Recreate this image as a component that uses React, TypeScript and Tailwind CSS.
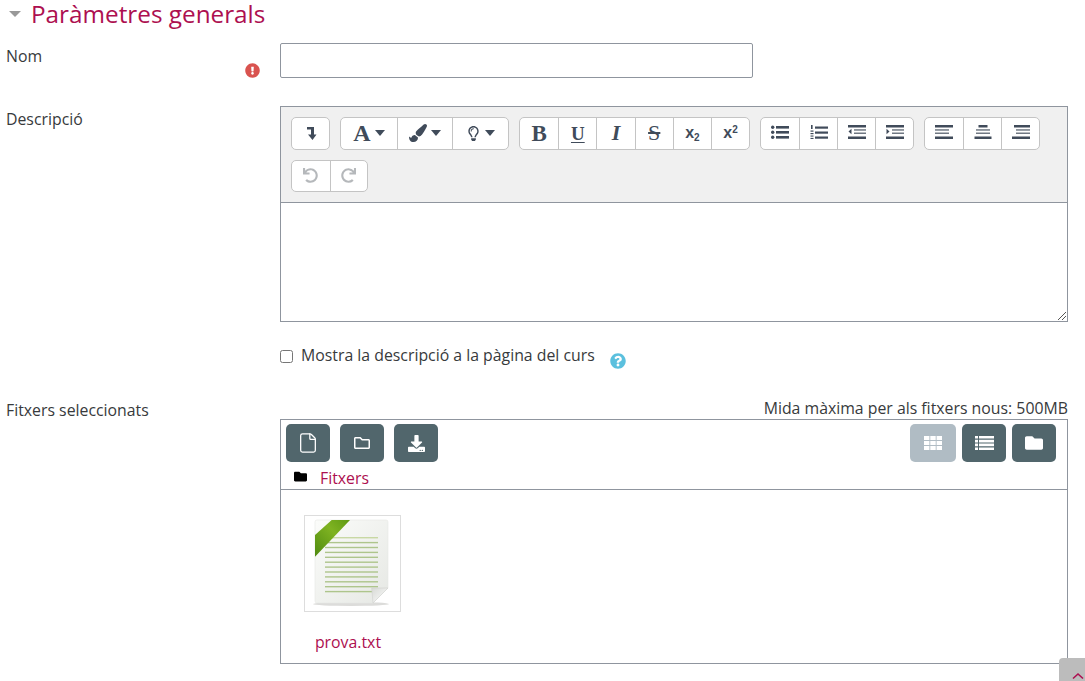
import type { ReactNode } from "react";
import { File } from "lucide-react";
import {
  FaDownload,
  FaExclamationCircle,
  FaFolder,
  FaPaintBrush,
  FaQuestionCircle,
  FaRedo,
  FaRegFolder,
  FaRegLightbulb,
  FaUndo,
} from "react-icons/fa";

const serif = "font-['Liberation_Serif',serif] font-bold text-[#404b5a]";

type Bar = [number, number, number, number, number?];

// the atto toolbar glyphs are mostly stacks of bars
function Bars({ bars, extra, w = 18, h = 14 }: { bars: Bar[]; extra?: ReactNode; w?: number; h?: number }) {
  return (
    <svg width={w} height={h} viewBox={`0 0 ${w} ${h}`} className="-mt-[2px]" fill="currentColor">
      {bars.map(([x, y, bw, bh, o], i) => (
        <rect key={i} x={x} y={y} width={bw} height={bh} opacity={o ?? 1} />
      ))}
      {extra}
    </svg>
  );
}

const listBars: Bar[] = [
  [5, 1, 13, 2.6],
  [5, 6, 13, 2.6],
  [5, 11, 13, 2.6],
];

function Caret() {
  return <div className="w-0 h-0 border-x-[5.5px] border-x-transparent border-t-[6px] border-t-[#404b5a]" />;
}

function CollapseIcon() {
  return (
    <svg width="16" height="16" viewBox="0 0 16 16" className="text-[#404b5a]">
      <path d="M4 2h7v7.5h2.5L9.5 15l-4.5-5.5h3V4.5H4z" fill="currentColor" />
    </svg>
  );
}

function ToolButton({ children, w = "w-[38px]" }: { children: ReactNode; w?: string }) {
  return (
    <div
      className={
        w +
        " h-full flex items-center justify-center gap-[4px] border-l border-[#c4c4c4] first:border-l-0 text-[#404b5a] text-[15px]"
      }
    >
      {children}
    </div>
  );
}

function ToolGroup({ children }: { children: ReactNode }) {
  return (
    <div className="flex h-[32.5px] items-stretch bg-white border border-[#c4c4c4] rounded-[5px]">
      {children}
    </div>
  );
}

function FmButton({ children, muted }: { children: ReactNode; muted?: boolean }) {
  return (
    <div
      className={
        (muted ? "bg-[#b0bcc4]" : "bg-[#51666c]") +
        " w-full h-[38px] rounded-[5px] flex items-center justify-center text-white text-[16px]"
      }
    >
      {children}
    </div>
  );
}

function TxtThumb() {
  const lines = [0, 1, 2, 3, 4, 5, 6, 7, 8, 9, 10, 11];
  return (
    <svg width="95" height="95" viewBox="0 0 95 95">
      <defs>
        <linearGradient id="page" x1="0" y1="0" x2="1" y2="1">
          <stop offset="0" stopColor="#fbfcfa" />
          <stop offset="1" stopColor="#e6e8e4" />
        </linearGradient>
        <linearGradient id="ribbon" x1="0" y1="1" x2="1" y2="0">
          <stop offset="0" stopColor="#4f8a10" />
          <stop offset="0.6" stopColor="#7fb321" />
          <stop offset="1" stopColor="#5f9a14" />
        </linearGradient>
        <linearGradient id="fold" x1="0" y1="0" x2="1" y2="1">
          <stop offset="0" stopColor="#d8dad6" />
          <stop offset="1" stopColor="#ffffff" />
        </linearGradient>
      </defs>
      <ellipse cx="46" cy="88" rx="38" ry="2" fill="#dcdcda" />
      <path d="M10 6a2 2 0 0 1 2-2h69a2 2 0 0 1 2 2v66L68 87H12a2 2 0 0 1-2-2z" fill="url(#page)" stroke="#e6e7e4" strokeWidth="0.6" />
      {lines.map((i) => (
        <rect key={i} x="20" y={21 + i * 4.9} width="53" height="1.4" fill={i < 1 ? "#c8d8a4" : "#aec58c"} />
      ))}
      <path d="M10 19 L26.7 4 L45 4 L10 40.7 Z" fill="url(#ribbon)" />
      <path d="M66.7 72 L83 72 L68 87 Z" fill="url(#fold)" stroke="#d0d2ce" strokeWidth="0.6" />
    </svg>
  );
}

export default function App() {
  return (
    <div className="relative w-[1085px] h-[681px] overflow-hidden bg-white font-['Open_Sans',sans-serif] text-[15.84px] leading-[22px] text-[#373a3c]">
      {/* section title */}
      <div className="flex items-center h-[27px] pl-[9px] gap-[10px]">
        <div className="w-0 h-0 border-x-[6px] border-x-transparent border-t-[6px] border-t-[#999]" />
        <h2 className="text-[24.3px] leading-[27px] -mt-[1px] text-[#ad0f50]">Paràmetres generals</h2>
      </div>

      {/* name */}
      <div className="flex mt-[16px]">
        <div className="w-[280px] flex justify-between pl-[6px] pr-[20px]">
          <span className="mt-[2px]">Nom</span>
          <FaExclamationCircle className="mt-[20px] text-[15px] text-[#d9534f]" />
        </div>
        <div className="w-[473px] h-[35px] border border-[#8f959e] rounded-[2px] bg-white" />
      </div>

      {/* description */}
      <div className="flex mt-[28px]">
        <div className="w-[280px] pl-[6px] pt-[2px]">Descripció</div>
        <div className="w-[788px] h-[216px] border border-[#8f959e] flex flex-col">
          <div className="h-[96px] bg-[#f0f0f0] border-b border-[#8f959e] pt-[10px] pl-[10px] flex flex-wrap content-start gap-x-[10px] gap-y-[10px]">
            <ToolGroup>
              <ToolButton w="w-[37px]"><CollapseIcon /></ToolButton>
            </ToolGroup>
            <ToolGroup>
              <ToolButton w="w-[55.7px]">
                <span className={serif + " text-[24px] leading-none"}>A</span>
                <Caret />
              </ToolButton>
              <ToolButton w="w-[55.7px]">
                <FaPaintBrush className="text-[18px]" />
                <Caret />
              </ToolButton>
              <ToolButton w="w-[55.7px]">
                <FaRegLightbulb className="text-[15px]" />
                <Caret />
              </ToolButton>
            </ToolGroup>
            <ToolGroup>
              <ToolButton w="w-[38.2px]"><span className={serif + " text-[23px] leading-none"}>B</span></ToolButton>
              <ToolButton w="w-[38.2px]"><span className={serif + " text-[19px] leading-none underline underline-offset-2"}>U</span></ToolButton>
              <ToolButton w="w-[38.2px]"><span className={serif + " text-[22px] leading-none italic"}>I</span></ToolButton>
              <ToolButton w="w-[38.2px]"><span className="font-['Liberation_Serif',serif] text-[#404b5a] text-[22px] leading-none line-through">S</span></ToolButton>
              <ToolButton w="w-[38.2px]">
                <span className="font-['Liberation_Sans',sans-serif] font-bold text-[16px] text-[#404b5a] leading-none">
                  x<sub className="text-[10px]">2</sub>
                </span>
              </ToolButton>
              <ToolButton w="w-[38.2px]">
                <span className="font-['Liberation_Sans',sans-serif] font-bold text-[16px] text-[#404b5a] leading-none">
                  x<sup className="text-[10px]">2</sup>
                </span>
              </ToolButton>
            </ToolGroup>
            <ToolGroup>
              <ToolButton>
                <Bars bars={listBars} extra={<><circle cx="1.7" cy="2.3" r="1.7" /><circle cx="1.7" cy="7.3" r="1.7" /><circle cx="1.7" cy="12.3" r="1.7" /></>} />
              </ToolButton>
              <ToolButton>
                <Bars
                  bars={[
                    [5, 1.5, 13, 2.2],
                    [5, 6.5, 13, 2.2],
                    [5, 11.5, 13, 2.2],
                    [1, 0, 1.6, 4],
                    [0.5, 5.5, 3, 1.2],
                    [0.5, 8, 3, 1.2],
                    [0.5, 10.5, 3, 1.1],
                    [0.5, 12.9, 3, 1.1],
                  ]}
                />
              </ToolButton>
              <ToolButton>
                <Bars
                  bars={[
                    [0, 0, 18, 2.5],
                    [6, 4.2, 12, 1.5, 0.75],
                    [6, 7.5, 12, 1.5, 0.75],
                    [0, 11.5, 18, 2.5],
                  ]}
                  extra={<path d="M0.5 6.5 3.5 3.8v5.4z" />}
                />
              </ToolButton>
              <ToolButton>
                <Bars
                  bars={[
                    [0, 0, 18, 2.5],
                    [6, 4.2, 12, 1.5, 0.75],
                    [6, 7.5, 12, 1.5, 0.75],
                    [0, 11.5, 18, 2.5],
                  ]}
                  extra={<path d="M3.5 6.5 0.5 3.8v5.4z" />}
                />
              </ToolButton>
            </ToolGroup>
            <ToolGroup>
              <ToolButton>
                <Bars bars={[[0, 0, 18, 2.5], [0, 4.2, 14, 1.5, 0.75], [0, 7.5, 14, 1.5, 0.75], [0, 11.5, 18, 2.5]]} />
              </ToolButton>
              <ToolButton>
                <Bars bars={[[4.5, 0, 9, 2.5], [2, 4.2, 14, 1.5, 0.75], [2, 7.5, 14, 1.5, 0.75], [0.5, 11.5, 17, 2.5]]} />
              </ToolButton>
              <ToolButton>
                <Bars bars={[[2, 0, 16, 2.5], [4, 4.2, 14, 1.5, 0.75], [4, 7.5, 14, 1.5, 0.75], [0, 11.5, 18, 2.5]]} />
              </ToolButton>
            </ToolGroup>
            <ToolGroup>
              <ToolButton w="w-[37.5px]"><FaUndo className="text-[15px] text-[#b5b8bb]" /></ToolButton>
              <ToolButton w="w-[37.5px]"><FaRedo className="text-[15px] text-[#b5b8bb]" /></ToolButton>
            </ToolGroup>
          </div>
          <div className="flex-1 relative bg-white">
            <svg width="10" height="10" viewBox="0 0 10 10" className="absolute right-0 bottom-0 text-[#555]">
              <path d="M9 1 1 9M9 5 5 9" stroke="currentColor" strokeWidth="1" />
            </svg>
          </div>
        </div>
      </div>

      {/* show description */}
      <div className="flex items-start mt-[22px] pl-[280px] h-[30px]">
        <input type="checkbox" readOnly className="w-[13px] h-[13px] mt-[6px]" />
        <span className="ml-[8px]">Mostra la descripció a la pàgina del curs</span>
        <FaQuestionCircle className="ml-[15px] mt-[9px] text-[16px] text-[#5bc0de]" />
      </div>

      {/* files */}
      <div className="flex mt-[22px]">
        <div className="w-[280px] pl-[6px] pt-[3px]">Fitxers seleccionats</div>
        <div className="w-[788px]">
          <div className="text-right h-[23px] leading-[24px]">Mida màxima per als fitxers nous: 500MB</div>
          <div className="h-[245px] border border-[#8f959e] flex flex-col">
            <div className="h-[70px] border-b border-[#8f959e] px-[5px] pt-[4px]">
              <div className="flex justify-between pr-[6px]">
                <div className="flex gap-[10px]">
                  <div className="w-[44px]"><FmButton><File size={22} strokeWidth={1.4} /></FmButton></div>
                  <div className="w-[44px]"><FmButton><FaRegFolder /></FmButton></div>
                  <div className="w-[44px]"><FmButton><FaDownload className="text-[17px]" /></FmButton></div>
                </div>
                <div className="flex gap-[6px]">
                  <div className="w-[46px]">
                    <FmButton muted>
                      <svg width="18" height="14" viewBox="0 0 18 14" fill="currentColor">
                        <path d="M0 0h5.4v4H0zM6.3 0h5.4v4H6.3zM12.6 0H18v4h-5.4zM0 5h5.4v4H0zM6.3 5h5.4v4H6.3zM12.6 5H18v4h-5.4zM0 10h5.4v4H0zM6.3 10h5.4v4H6.3zM12.6 10H18v4h-5.4z" />
                      </svg>
                    </FmButton>
                  </div>
                  <div className="w-[44px]">
                    <FmButton>
                      <svg width="19" height="14" viewBox="0 0 19 14" fill="currentColor">
                        <path d="M0 0h3v2.6H0zM4 0h15v2.6H4zM0 3.8h3v2.6H0zM4 3.8h15v2.6H4zM0 7.6h3v2.6H0zM4 7.6h15v2.6H4zM0 11.4h3V14H0zM4 11.4h15V14H4z" />
                      </svg>
                    </FmButton>
                  </div>
                  <div className="w-[44px]"><FmButton><FaFolder className="text-[18px]" /></FmButton></div>
                </div>
              </div>
              <div className="flex items-center h-[22px] mt-[5px] pl-[8px]">
                <FaFolder className="text-[13px] text-black -mt-[4px]" />
                <span className="ml-[13px] text-[#ad0f50]">Fitxers</span>
              </div>
            </div>
            <div className="flex-1 pt-[25px] pl-[23px]">
              <div className="w-[97px] h-[97px] border border-[#ddd]">
                <TxtThumb />
              </div>
              <div className="w-[88px] mt-[19px] text-center text-[#ad0f50]">prova.txt</div>
            </div>
          </div>
        </div>
      </div>

      {/* back to top corner */}
      <div className="absolute left-[1059px] top-[658px] w-[26px] h-[23px] bg-[#bcbcbc] rounded-tl-[4px] flex items-end justify-center">
        <svg width="12" height="8" viewBox="0 0 12 8" className="ml-[12px] mb-[1px]">
          <path d="M1 6.5 6 2l5 4.5" fill="none" stroke="#ad0f50" strokeWidth="1.6" />
        </svg>
      </div>
    </div>
  );
}
